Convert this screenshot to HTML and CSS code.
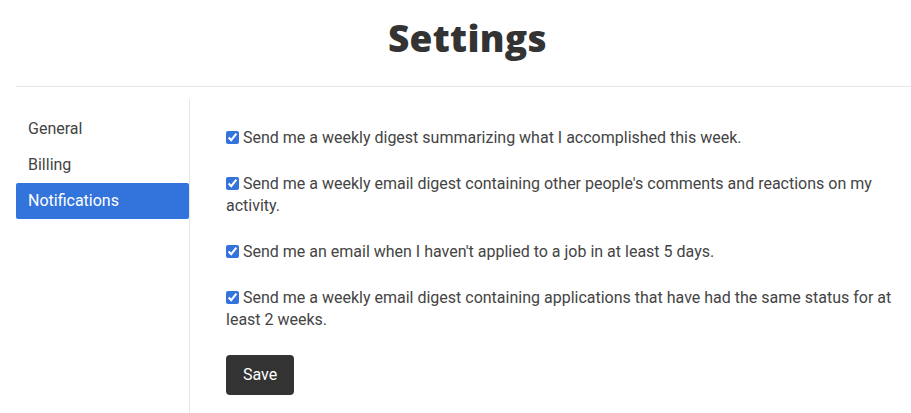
FILE: index.html
```
<!doctype html>
<html>
 <head>
  <meta charset="UTF-8">
  <title>Settings</title>
  <link rel="stylesheet" href="styles.css">
 </head>
 <body>
  <div class="page">
	<header class="header">
	  <h1 class="title">Settings</h1>
	</header>
	<div class="layout">
	  <ul class="sidebar">
		<li>General</li>
		<li>Billing</li>
		<li class="active">Notifications</li>
	  </ul>
	  <form class="content">
		<label class="option"><input type="checkbox" checked> Send me a weekly digest summarizing what I accomplished this week.</label>
		<label class="option"><input type="checkbox" checked> Send me a weekly email digest containing other people's comments and reactions on my activity.</label>
		<label class="option"><input type="checkbox" checked> Send me an email when I haven't applied to a job in at least 5 days.</label>
		<label class="option"><input type="checkbox" checked> Send me a weekly email digest containing applications that have had the same status for at least 2 weeks.</label>
		<button type="button" class="save">Save</button>
	  </form>
	</div>
  </div>
 </body>
</html>
```

FILE: styles.css
```
*{
	margin:0;
	padding:0;
	box-sizing:border-box;
}
body{
	font-family:Roboto, "Liberation Sans", sans-serif;
	font-size:16px;
	color:#444;
	background:#fff;
}
ul{
	list-style:none;
}
.page{
	padding-left:16px;
}
.header{
	height:87px;
	border-bottom:1px solid #e6e6e6;
	display:flex;
	justify-content:center;
	padding-top:14px;
	padding-left:8px;
}
.title{
	font-family:"Open Sans", sans-serif;
	font-weight:800;
	font-size:37px;
	line-height:48px;
	color:#333;
	letter-spacing:0.3px;
}
.layout{
	display:flex;
	margin-top:12px;
	min-height:320px;
}
.sidebar{
	width:174px;
	flex-shrink:0;
	border-right:1px solid #e6e6e6;
	padding-top:12px;
}
.sidebar>li{
	height:36px;
	line-height:36px;
	padding-left:12px;
	width:173px;
	border-radius:2px;
}
.sidebar>li.active{
	background-color:#3273dc;
	color:#fff;
}
.content{
	flex:1;
	padding:28px 16px 0 36px;
	display:flex;
	flex-direction:column;
	align-items:flex-start;
}
.option{
	display:block;
	line-height:22px;
	margin-bottom:24px;
}
.option input{
	margin:0;
	width:13px;
	height:13px;
	accent-color:#3273dc;
	vertical-align:-1px;
}
.save{
	font-family:inherit;
	font-size:16px;
	color:#fff;
	background:#333;
	border:none;
	border-radius:4px;
	padding:9px 17px;
	line-height:22px;
}
```
